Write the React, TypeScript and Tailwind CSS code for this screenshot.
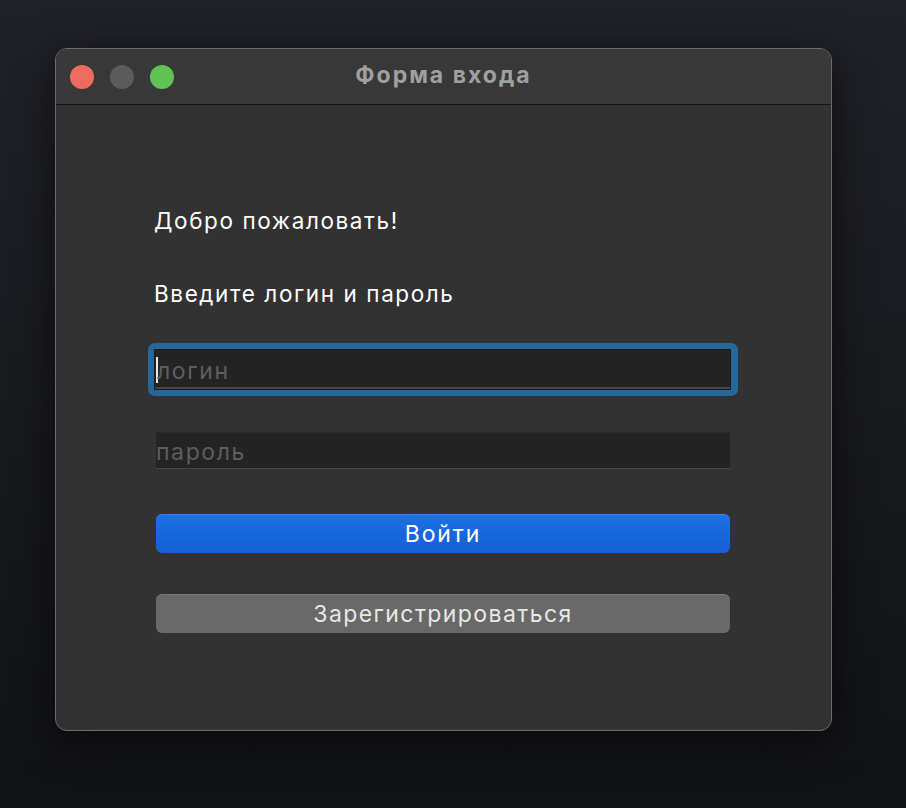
import React from "react";

export default function App() {
  return (
    <div
      className="w-[906px] h-[808px] bg-gradient-to-b from-[#202127] to-[#121316] pt-[48px] pl-[55px]"
      style={{ fontFamily: 'Inter, "Noto Sans", sans-serif' }}
    >
      <div className="w-[777px] h-[683px] rounded-[12px] border border-[#6b6b6b] bg-[#323232] shadow-[0_10px_40px_rgba(0,0,0,0.6)] overflow-hidden flex flex-col">
        <div className="relative h-[56px] bg-[#383838] border-b border-[#151515] flex items-center pl-[14px] gap-[16px] shrink-0">
          <div className="w-[24px] h-[24px] rounded-full bg-[#ee6b60]" />
          <div className="w-[24px] h-[24px] rounded-full bg-[#5b5b5b]" />
          <div className="w-[24px] h-[24px] rounded-full bg-[#5fc454]" />
          <div className="absolute inset-0 flex items-center justify-center pb-[2px] text-[23px] font-bold text-[#a0a0a0] tracking-[2px]">
            Форма входа
          </div>
        </div>
        <div className="flex flex-col pl-[98px] pt-[102px]">
          <div className="h-[28px] leading-[28px] text-[22.5px] text-white tracking-[1.6px]">Добро пожаловать!</div>
          <div className="h-[28px] leading-[28px] text-[22.5px] text-white mt-[45px] tracking-[1.6px]">Введите логин и пароль</div>
          <div className="mt-[35px] -ml-[6px] w-[590px] h-[53px] rounded-[7px] bg-[#26689a] p-[6px] pl-[6px]">
            <div className="h-[41px] w-[577px] border border-[#1c1c1c] bg-[#242424] flex items-center relative">
              <div className="w-full h-full border-b-2 border-[#464646] flex items-center pl-[1px]">
                <span className="w-[2px] h-[26px] bg-[#e8e8e8] mr-[1px] mt-[3px]" />
                <span className="text-[23px] text-[#5e5e5e] leading-none -ml-[2px] mt-[5px] tracking-[1.6px]">логин</span>
              </div>
            </div>
          </div>
          <div className="mt-[36px] ml-[2px] w-[574px] h-[37px] bg-[#242424] border-t border-[#2a2a2a] border-b border-b-[#474747] flex items-center">
            <span className="text-[23px] text-[#5e5e5e] leading-none mt-[4px] tracking-[1.6px]">пароль</span>
          </div>
          <div className="mt-[45px] ml-[2px] w-[574px] h-[39px] rounded-[6px] bg-gradient-to-b from-[#1b6fe9] to-[#175fd4] border-t border-[#3a82ee] flex items-center justify-center text-[23px] text-white tracking-[1.9px]">
            Войти
          </div>
          <div className="mt-[41px] ml-[2px] w-[574px] h-[39px] rounded-[6px] bg-[#696969] border-t border-[#7a7a7a] flex items-center justify-center text-[23px] text-[#e8e8e8] tracking-[1.4px]">
            Зарегистрироваться
          </div>
        </div>
      </div>
    </div>
  );
}
